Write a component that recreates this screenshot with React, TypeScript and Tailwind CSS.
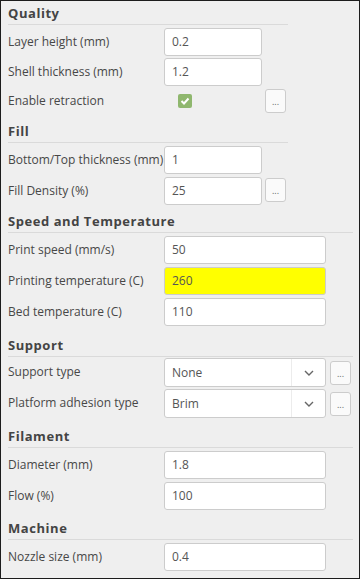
import type { ReactNode } from "react";

type Field = { label: string; value: string; yellow?: boolean };

function Heading({ title }: { title: string }) {
  return (
    <div className="pt-[3px] pb-[2px] text-[13px] leading-[18px] font-bold tracking-[0.55px] text-[#444] border-b border-[#dadada]">
      {title}
    </div>
  );
}

function Row({ label, children, className = "h-[31px] pt-[3px]" }: { label: string; children: ReactNode; className?: string }) {
  return (
    <div className={`flex items-start ${className}`}>
      <div className="w-[156px] shrink-0 text-[12px] leading-[28px] text-[#474747] whitespace-nowrap">{label}</div>
      {children}
    </div>
  );
}

function TextBox({ value, width, yellow }: { value: string; width: string; yellow?: boolean }) {
  return (
    <div
      className={`${width} h-[28px] shrink-0 rounded-[3px] border border-[#cccccc] px-[7px] text-[12px] leading-[26px] text-[#555] ${
        yellow ? "bg-[#ffff00]" : "bg-white"
      }`}
    >
      {value}
    </div>
  );
}

function MoreButton({ className = "" }: { className?: string }) {
  return (
    <div
      className={`flex h-[24px] w-[21px] shrink-0 items-center justify-center rounded-[3px] border border-[#cccccc] bg-[#fafafa] text-[9px] leading-none text-[#666] ${className}`}
    >
      ...
    </div>
  );
}

function Select({ value }: { value: string }) {
  return (
    <div className="flex h-[29px] w-[162px] shrink-0 rounded-[3px] border border-[#cccccc] bg-white text-[12px] text-[#555]">
      <div className="flex-1 pl-[7px] leading-[27px]">{value}</div>
      <div className="flex w-[34px] items-center justify-center border-l border-[#ececec]">
        <svg width="10" height="6" viewBox="0 0 10 6">
          <polyline points="1,1 5,5 9,1" fill="none" stroke="#666" strokeWidth="1.4" />
        </svg>
      </div>
    </div>
  );
}

const speed: Field[] = [
  { label: "Print speed (mm/s)", value: "50" },
  { label: "Printing temperature (C)", value: "260", yellow: true },
  { label: "Bed temperature (C)", value: "110" },
];

const filament: Field[] = [
  { label: "Diameter (mm)", value: "1.8" },
  { label: "Flow (%)", value: "100" },
];

export default function App() {
  return (
    <div
      className="h-[579px] w-[360px] overflow-hidden border border-[#1c1c1c] bg-[#efefef] pl-[7px]"
      style={{ fontFamily: '"Open Sans", "Noto Sans", sans-serif' }}
    >
      {/* Quality */}
      <section className="w-[280px]">
        <Heading title="Quality" />
        <Row label="Layer height (mm)" className="h-[30px] pt-[3px]">
          <TextBox value="0.2" width="w-[98px]" />
        </Row>
        <Row label="Shell thickness (mm)">
          <TextBox value="1.2" width="w-[98px]" />
        </Row>
        <div className="flex h-[27px] items-start pt-[3px]">
          <div className="w-[156px] shrink-0 text-[12px] leading-[23px] text-[#474747]">Enable retraction</div>
          <div className="w-[98px] shrink-0 pl-[14px] pt-[5px]">
            <div className="flex h-[14px] w-[14px] items-center justify-center rounded-[2px] bg-[#8fb76e]">
              <svg width="10" height="8" viewBox="0 0 10 8">
                <polyline points="1.5,4 4,6.5 8.5,1.5" fill="none" stroke="white" strokeWidth="2" />
              </svg>
            </div>
          </div>
          <MoreButton className="ml-[3px] h-[23px]" />
        </div>
      </section>

      {/* Fill */}
      <section className="mt-[6px] w-[280px]">
        <Heading title="Fill" />
        <Row label="Bottom/Top thickness (mm)">
          <TextBox value="1" width="w-[98px]" />
        </Row>
        <Row label="Fill Density (%)">
          <TextBox value="25" width="w-[98px]" />
          <MoreButton className="ml-[3px] mt-[1px]" />
        </Row>
      </section>

      {/* Speed and Temperature */}
      <section className="mt-[4px] w-[345px]">
        <Heading title="Speed and Temperature" />
        {speed.map((f) => (
          <Row key={f.label} label={f.label}>
            <TextBox value={f.value} width="w-[162px]" yellow={f.yellow} />
          </Row>
        ))}
      </section>

      {/* Support */}
      <section className="mt-[7px] w-[345px]">
        <Heading title="Support" />
        <Row label="Support type" className="h-[31px] pt-[1px]">
          <Select value="None" />
          <MoreButton className="ml-[4px] mt-[3px] w-[20px]" />
        </Row>
        <Row label="Platform adhesion type" className="h-[31px] pt-[1px]">
          <Select value="Brim" />
          <MoreButton className="ml-[4px] mt-[3px] w-[20px]" />
        </Row>
      </section>

      {/* Filament */}
      <section className="mt-[5px] w-[345px]">
        <Heading title="Filament" />
        {filament.map((f) => (
          <Row key={f.label} label={f.label}>
            <TextBox value={f.value} width="w-[162px]" />
          </Row>
        ))}
      </section>

      {/* Machine */}
      <section className="mt-[6px] w-[345px]">
        <Heading title="Machine" />
        <Row label="Nozzle size (mm)">
          <TextBox value="0.4" width="w-[162px]" />
        </Row>
      </section>
    </div>
  );
}
